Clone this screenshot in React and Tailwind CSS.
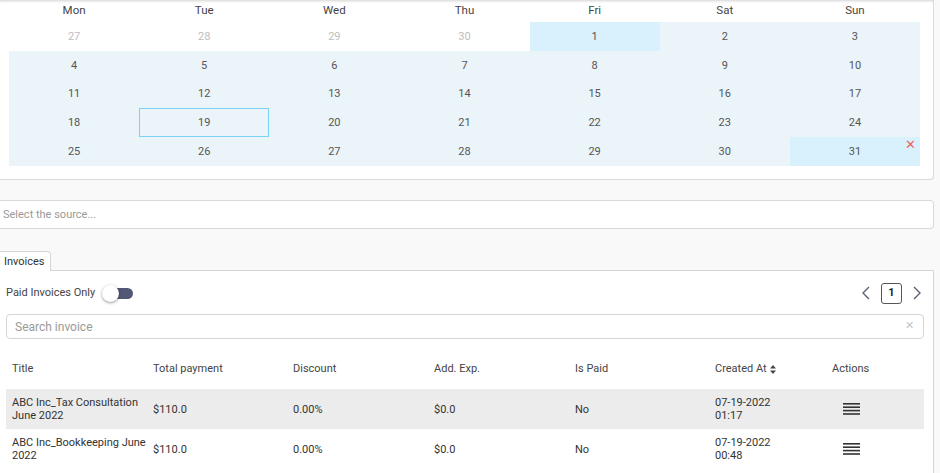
import React from "react";

const days = ["Mon", "Tue", "Wed", "Thu", "Fri", "Sat", "Sun"];
const weeks = [
  [27, 28, 29, 30, 1, 2, 3],
  [4, 5, 6, 7, 8, 9, 10],
  [11, 12, 13, 14, 15, 16, 17],
  [18, 19, 20, 21, 22, 23, 24],
  [25, 26, 27, 28, 29, 30, 31],
];
const rowH = ["h-[29px]", "h-[28px]", "h-[29px]", "h-[29px]", "h-[29px]"];

function Cell({ w, d, c }) {
  const other = w === 0 && c < 4;
  const strong = (w === 0 && c === 4) || (w === 4 && c === 6);
  const selected = w === 3 && c === 1;
  let bg = "bg-[#ebf4f9]";
  if (other) bg = "bg-white";
  if (strong) bg = "bg-[#d8f1fc]";
  return (
    <div
      className={`relative flex items-center justify-center pt-[2px] ${rowH[w]} ${bg} ${
        other ? "text-[#bdbdbd]" : "text-[#555]"
      } ${selected ? "border border-[#7ad3f3]" : ""}`}
    >
      {d}
      {w === 4 && c === 6 && (
        <span className="absolute right-[4px] top-[1px] text-[13px] leading-none text-[#f06262]">✕</span>
      )}
    </div>
  );
}

function MenuIcon() {
  return (
    <svg width="17" height="12" viewBox="0 0 17 12">
      <rect x="0" y="0" width="17" height="1.6" fill="#333" />
      <rect x="0" y="3.4" width="17" height="1.6" fill="#333" />
      <rect x="0" y="6.8" width="17" height="1.6" fill="#333" />
      <rect x="0" y="10.2" width="17" height="1.6" fill="#333" />
    </svg>
  );
}

const cols = ["w-[141px]", "w-[140px]", "w-[141px]", "w-[141px]", "w-[140px]", "w-[117px]", "w-[98px]"];

const rows = [
  { t: ["ABC Inc_Tax Consultation", "June 2022"], d: ["07-19-2022", "01:17"], bg: "bg-[#ececec]" },
  { t: ["ABC Inc_Bookkeeping June", "2022"], d: ["07-19-2022", "00:48"], bg: "bg-white" },
];

export default function App() {
  return (
    <div
      className="w-[940px] h-[473px] overflow-hidden bg-[#f9f9f9] text-[11px] text-[#444]"
      style={{ fontFamily: "Roboto, 'Noto Sans', sans-serif" }}
    >
      {/* Calendar card */}
      <div className="w-[934px] h-[180px] bg-white border-r border-b border-[#dadada] rounded-br-[4px] pl-[9px] pr-[13px] shadow-[inset_0_3px_3px_-2px_rgba(0,0,0,0.18)]">
        <div className="grid grid-cols-7 h-[22px] items-center text-[#444] text-[11.5px]">
          {days.map((d) => (
            <div key={d} className="text-center">{d}</div>
          ))}
        </div>
        {weeks.map((wk, w) => (
          <div key={w} className="grid grid-cols-7 text-[11px]">
            {wk.map((d, c) => (
              <Cell key={c} w={w} d={d} c={c} />
            ))}
          </div>
        ))}
      </div>

      {/* Source select */}
      <div className="mt-[20px] w-[934px] h-[29px] bg-white border-t border-r border-b border-[#d9d9d9] rounded-r-[4px] flex items-center pl-[3px] pt-[2px] text-[#9a9a9a] text-[11px]">
        Select the source...
      </div>

      {/* Tabs */}
      <div className="mt-[22px] flex">
        <div className="h-[20px] w-[51px] bg-white border-t border-r border-[#d5d5d5] rounded-tr-[4px] flex items-center pl-[4px] pt-[1px] text-[#333] text-[11px] relative z-10 -mb-px">
          Invoices
        </div>
      </div>
      <div className="w-[934px] h-[210px] bg-white border-t border-r border-[#d5d5d5] pl-[6px] pr-[10px]">
        {/* toolbar */}
        <div className="flex items-center justify-between h-[43px] pt-[1px]">
          <div className="flex items-center">
            <span className="text-[#444] text-[11px]">Paid Invoices Only</span>
            <div className="relative ml-[7px] w-[31px] h-[17px] flex items-center">
              <div className="absolute left-[6px] right-0 h-[11px] rounded-full bg-[#525775]" />
              <div className="absolute left-0 w-[17px] h-[17px] rounded-full bg-white shadow-[0_1px_3px_rgba(0,0,0,0.4)]" />
            </div>
          </div>
          <div className="flex items-center gap-[10px] pr-[1px]">
            <svg width="10" height="14" viewBox="0 0 10 14">
              <path d="M8 1 L2 7 L8 13" fill="none" stroke="#5b6275" strokeWidth="1.4" />
            </svg>
            <div className="w-[21px] h-[21px] border border-[#555] rounded-[3px] flex items-center justify-center text-[11px] font-bold text-[#223]">
              1
            </div>
            <svg width="10" height="14" viewBox="0 0 10 14">
              <path d="M2 1 L8 7 L2 13" fill="none" stroke="#5b6275" strokeWidth="1.4" />
            </svg>
          </div>
        </div>

        {/* search */}
        <div className="w-[918px] h-[25px] border border-[#d5d5d5] rounded-[4px] flex items-center justify-between pl-[8px] pr-[9px] text-[12px] text-[#9a9a9a]">
          <span>Search invoice</span>
          <span className="text-[#c4c4c4] text-[11px]">✕</span>
        </div>

        {/* table */}
        <div className="w-[918px] mt-[15px]">
          <div className="flex h-[35px] items-center pb-[4px] text-[#444]">
            {["Title", "Total payment", "Discount", "Add. Exp.", "Is Paid", "Created At", "Actions"].map((h, i) => (
              <div key={h} className={`${cols[i]} pl-[6px] flex items-center`}>
                {h}
                {h === "Created At" && (
                  <svg className="ml-[3px]" width="6" height="9" viewBox="0 0 6 9">
                    <path d="M3 0 L6 3.5 L0 3.5 Z M3 9 L6 5.5 L0 5.5 Z" fill="#444" />
                  </svg>
                )}
              </div>
            ))}
          </div>
          {rows.map((r, i) => (
            <div key={i} className={`flex h-[40px] items-center ${r.bg} text-[#333] leading-[13px]`}>
              <div className={`${cols[0]} pl-[6px]`}>
                <div>{r.t[0]}</div>
                <div>{r.t[1]}</div>
              </div>
              <div className={`${cols[1]} pl-[6px]`}>$110.0</div>
              <div className={`${cols[2]} pl-[6px]`}>0.00%</div>
              <div className={`${cols[3]} pl-[6px]`}>$0.0</div>
              <div className={`${cols[4]} pl-[6px]`}>No</div>
              <div className={`${cols[5]} pl-[6px]`}>
                <div>{r.d[0]}</div>
                <div>{r.d[1]}</div>
              </div>
              <div className={`${cols[6]} pl-[17px] flex items-center`}>
                <MenuIcon />
              </div>
            </div>
          ))}
        </div>
      </div>
    </div>
  );
}
